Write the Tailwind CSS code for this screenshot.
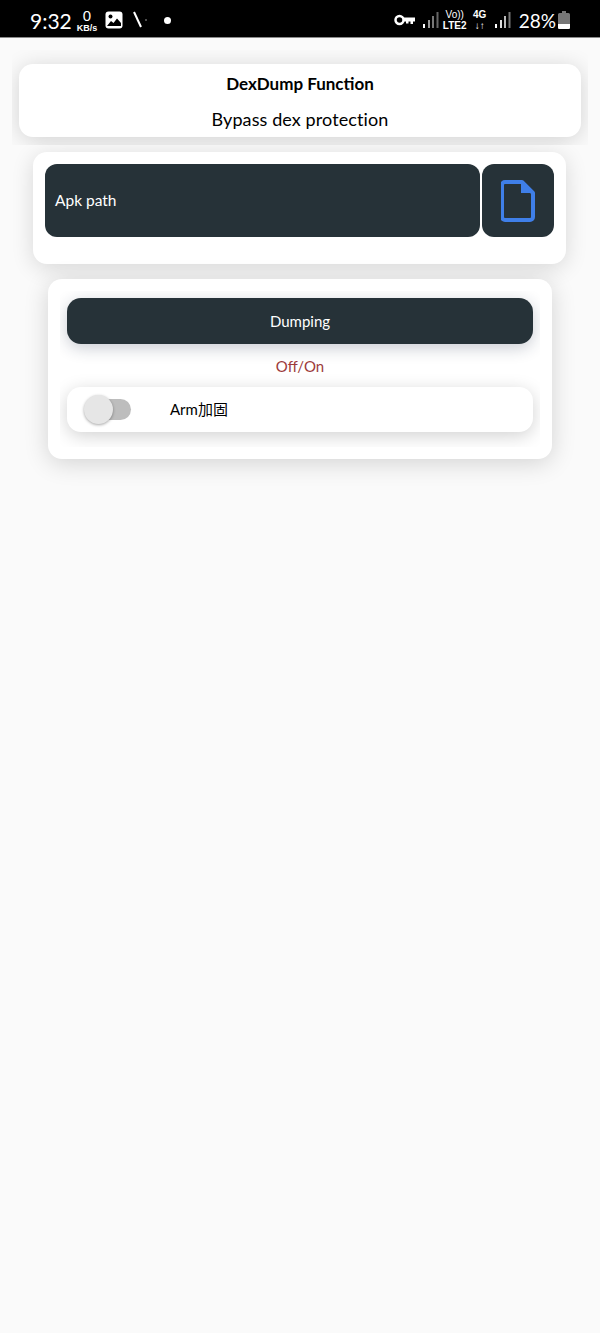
<!DOCTYPE html>
<html lang="en">
<head>
  <meta charset="UTF-8" />
  <title>DexDump Function</title>
  <script src="https://cdn.jsdelivr.net/npm/@tailwindcss/browser@4"></script>
</head>
<body class="h-[1333px] overflow-hidden bg-[#fafafa] font-['Lato','Noto_Sans_CJK_SC',sans-serif]">
  <!-- status bar -->
  <div class="h-[38px] bg-black border-b border-[#8a8a8a] flex items-center justify-between pt-[3px] pl-[30px] pr-[30px] text-white">
    <div class="flex items-center">
      <span class="text-[21px] leading-none w-[41px]">9:32</span>
      <div class="ml-[5px] w-[22px] flex flex-col items-center font-['Liberation_Sans',sans-serif]">
        <span class="text-[15px] leading-[15px]">0</span>
        <span class="text-[9px] leading-[10px] font-bold">KB/s</span>
      </div>
      <svg class="ml-[7px]" width="18" height="18" viewBox="0 0 18 18">
        <rect x="0.5" y="0.5" width="17" height="17" rx="3" fill="#fff" />
        <circle cx="5.500" cy="5.500" r="2" fill="#000" />
        <path d="M2 15l4-5 2.500 2 3.500-4.500 4 4.500v3z" fill="#000" />
      </svg>
      <svg class="ml-[10px]" width="16" height="18" viewBox="0 0 16 18">
        <path d="M1 1l7 15" stroke="#fff" stroke-width="2" fill="none" />
        <circle cx="13" cy="9" r="0.8" fill="#aaa" />
      </svg>
      <span class="ml-[15px] w-[7px] h-[7px] rounded-full bg-white"></span>
    </div>
    <div class="flex items-center">
      <svg width="22" height="12" viewBox="0 0 22 12">
        <circle cx="5.500" cy="6" r="4" stroke="#fff" stroke-width="2.500" fill="none" />
        <path d="M9 3.500h12v4h-2v2.500h-2.500v-2.500h-2v2h-2.500v-2h-3z" fill="#fff" />
      </svg>
      <svg class="ml-[7px]" width="16" height="18" viewBox="0 0 16 18">
        <rect x="0" y="13" width="2" height="4" fill="#fff" />
        <rect x="5" y="9" width="2" height="8" fill="#999" />
        <rect x="9" y="5" width="2" height="12" fill="#777" />
        <rect x="13.500" y="1" width="2" height="16" fill="#666" />
      </svg>
      <div class="ml-[4px] w-[24px] flex flex-col items-center font-['Liberation_Sans',sans-serif] text-[10px] leading-[11px]">
        <span>Vo))</span>
        <span class="font-bold">LTE2</span>
      </div>
      <div class="ml-[5px] w-[16px] flex flex-col items-center font-['Liberation_Sans',sans-serif] text-[10px] leading-[11px] font-bold">
        <span>4G</span>
        <span>↓↑</span>
      </div>
      <svg class="ml-[7px]" width="16" height="18" viewBox="0 0 16 18">
        <rect x="0" y="13" width="2" height="4" fill="#fff" />
        <rect x="5" y="9" width="2" height="8" fill="#ddd" />
        <rect x="9" y="5" width="2" height="12" fill="#bbb" />
        <rect x="13.500" y="1" width="2" height="16" fill="#777" />
      </svg>
      <span class="ml-[8px] text-[19px] leading-none">28%</span>
      <svg class="ml-[2px]" width="12" height="18" viewBox="0 0 12 18">
        <path d="M4 0h4v2h2.500a1.500 1.500 0 0 1 1.500 1.500v13a1.500 1.500 0 0 1-1.500 1.500h-9a1.500 1.500 0 0 1-1.500-1.500v-13a1.500 1.500 0 0 1 1.500-1.500h2.500z" fill="#777" />
        <path d="M0 13h12v3.500a1.500 1.500 0 0 1-1.500 1.500h-9a1.500 1.500 0 0 1-1.500-1.500z" fill="#fff" />
      </svg>
    </div>
  </div>

  <!-- title -->
  <div class="mx-3 mt-[12px] overflow-hidden px-[7px] pt-[14px] pb-[8px]">
    <div class="h-[73px] rounded-[14px] bg-white shadow-[0_3px_22px_rgba(0,0,0,0.16)] flex flex-col items-center text-black">
      <div class="mt-[9px] text-[17px] leading-[22px] font-bold">DexDump Function</div>
      <div class="mt-[13px] text-[18px] leading-[22px] tracking-[0.1px]">Bypass dex protection</div>
    </div>
  </div>

  <!-- apk path -->
  <div class="ml-[33px] mr-[34px] mt-[7px] h-[112px] rounded-[14px] bg-white shadow-[0_4px_22px_rgba(0,0,0,0.14)] p-3">
    <div class="flex gap-[2px] h-[73px]">
      <div class="flex-1 rounded-[12px] bg-[#263238] flex items-center pl-[10px] text-white text-[15.500px]">Apk path</div>
      <div class="w-[72px] rounded-[12px] bg-[#263238] flex items-center justify-center">
        <svg width="34" height="42" viewBox="0 0 34 42">
          <path d="M4 2h17l11 11v24a3 3 0 0 1-3 3H4a3 3 0 0 1-3-3V5a3 3 0 0 1 3-3z" fill="none" stroke="#3f7fe8" stroke-width="4" stroke-linejoin="round" />
          <path d="M20 1l13 12H20z" fill="#3f7fe8" />
        </svg>
      </div>
    </div>
  </div>

  <!-- dumping -->
  <div class="mx-[48px] mt-[15px] h-[180px] rounded-[14px] bg-white shadow-[0_4px_24px_rgba(0,0,0,0.16)] px-3 pt-3">
    <div class="h-[156px] overflow-hidden px-[7px] pt-[7px]">
      <div class="h-[46px] rounded-[14px] bg-[#263238] shadow-[0_4px_16px_rgba(30,40,70,0.24)] flex items-center justify-center text-white text-[15px]">Dumping</div>
      <div class="h-[43px] pt-[1px] flex items-center justify-center text-[#9c3b3b] text-[15px]">Off/On</div>
      <div class="h-[45px] rounded-[14px] bg-white shadow-[0_4px_18px_rgba(0,0,0,0.18)] flex items-center">
        <div class="relative ml-[19px] w-[45px] h-[21px] rounded-full bg-[#bdbdbd]">
          <span class="absolute -left-[2px] -top-[4px] w-[29px] h-[29px] rounded-full bg-[#e6e6e6] shadow-[0_1px_3px_rgba(0,0,0,0.35)]"></span>
        </div>
        <span class="ml-[39px] text-[15px] text-black">Arm加固</span>
      </div>
    </div>
  </div>
</body>
</html>
